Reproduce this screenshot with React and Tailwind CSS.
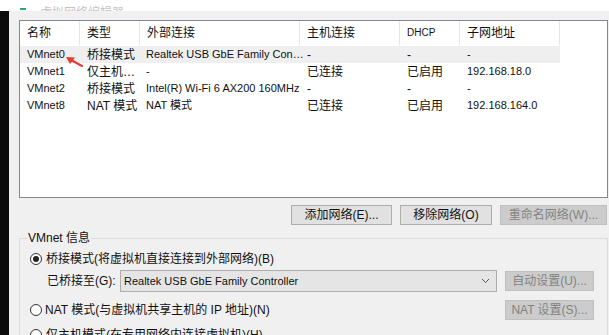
import React from 'react';

const font = { fontFamily: '"Liberation Sans", "Noto Sans CJK SC", sans-serif' };

const rows = [
  { name: 'VMnet0', type: '桥接模式', ext: 'Realtek USB GbE Family Con…', host: '-', dhcp: '-', subnet: '-', selected: true },
  { name: 'VMnet1', type: '仅主机…', ext: '-', host: '已连接', dhcp: '已启用', subnet: '192.168.18.0' },
  { name: 'VMnet2', type: '桥接模式', ext: 'Intel(R) Wi-Fi 6 AX200 160MHz', host: '-', dhcp: '-', subnet: '-' },
  { name: 'VMnet8', type: 'NAT 模式', ext: 'NAT 模式', host: '已连接', dhcp: '已启用', subnet: '192.168.164.0' },
];

function Radio({ checked }) {
  return (
    <span className="w-[12px] h-[12px] rounded-full border border-[#333333] bg-white flex items-center justify-center shrink-0">
      {checked && <span className="w-[6px] h-[6px] rounded-full bg-[#222222]" />}
    </span>
  );
}

function Button({ children, disabled, className }) {
  return (
    <div
      className={
        'h-[20px] flex items-center justify-center border text-[12px] whitespace-nowrap ' +
        (disabled
          ? 'bg-[#cccccc] border-[#bfbfbf] text-[#838383] '
          : 'bg-[#e1e1e1] border-[#adadad] text-[#111111] ') +
        className
      }
    >
      {children}
    </div>
  );
}

export default function App() {
  return (
    <div className="w-[609px] h-[335px] overflow-hidden bg-[#f0f0f0] text-[#111111] text-[12px] leading-none" style={font}>
      {/* title bar remainder */}
      <div className="h-[11px] bg-white overflow-hidden flex items-end pl-[20px]">
        <div className="w-[6px] h-[2px] bg-[#2fa37a] mb-[1px]" />
        <div className="text-[12px] text-[#c4c4c4] -mb-[8px] ml-[14px] whitespace-nowrap">虚拟网络编辑器</div>
      </div>

      <div className="flex h-[324px]">
        <div className="w-[9px] bg-[#0c0c0c] shrink-0" />
        <div className="flex-1 pl-[10px] pt-[9px]">
          {/* network list */}
          <div className="relative w-[589px] h-[178px] bg-white border border-[#828790]">
            <div className="flex h-[24px] items-center">
              {[
                ['名称', 'w-[60px]'],
                ['类型', 'w-[60px]'],
                ['外部连接', 'w-[160px]'],
                ['主机连接', 'w-[100px]'],
                ['DHCP', 'w-[60px] text-[10px]'],
                ['子网地址', 'w-[100px]'],
              ].map(([t, c]) => (
                <div key={t} className={'h-full flex items-center pl-[7px] border-r border-[#e5e5e5] ' + c}>
                  {t}
                </div>
              ))}
            </div>
            <div className="mt-[1px]">
              {rows.map((r) => (
                <div key={r.name} className={'flex h-[17px] items-center w-[540px] whitespace-nowrap ' + (r.selected ? 'bg-[#efefef]' : '')}>
                  <div className="w-[60px] pl-[7px] text-[11px]">{r.name}</div>
                  <div className="w-[60px] pl-[7px]">{r.type}</div>
                  <div className="w-[160px] pl-[6px] text-[11px]">{r.ext}</div>
                  <div className="w-[100px] pl-[7px]">{r.host}</div>
                  <div className="w-[60px] pl-[7px]">{r.dhcp}</div>
                  <div className="w-[100px] pl-[7px] text-[11px]">{r.subnet}</div>
                </div>
              ))}
            </div>
            <svg className="absolute left-[45px] top-[35px]" width="20" height="12" viewBox="0 0 20 12">
              <line x1="17" y1="10" x2="6" y2="4" stroke="#e63b2e" strokeWidth="2" strokeLinecap="round" />
              <polygon points="1,1 10,1.5 5,8" fill="#e63b2e" />
            </svg>
          </div>

          {/* buttons */}
          <div className="flex justify-end gap-[8px] mt-[7px] w-[588px]">
            <Button className="w-[101px]">添加网络(E)...</Button>
            <Button className="w-[92px]">移除网络(O)</Button>
            <Button disabled className="w-[107px]">重命名网络(W)...</Button>
          </div>

          {/* group box */}
          <div className="relative mt-[13px] w-[589px] h-[120px] border border-[#dcdcdc] pl-[10px]">
            <div className="absolute left-[7px] -top-[7px] bg-[#f0f0f0] px-[1px] text-[12px]">VMnet 信息</div>
            <div className="flex items-center gap-[4px] mt-[13px] h-[14px]">
              <Radio checked />
              <span>桥接模式(将虚拟机直接连接到外部网络)(B)</span>
            </div>
            <div className="flex items-center mt-[4px] pl-[17px]">
              <span className="w-[73px]">已桥接至(G):</span>
              <div className="w-[377px] h-[22px] bg-[#e5e5e5] border border-[#adadad] flex items-center justify-between pl-[3px] pr-[6px]">
                <span className="text-[11px]">Realtek USB GbE Family Controller</span>
                <svg width="9" height="6" viewBox="0 0 9 6">
                  <polyline points="1,1 4.5,4.5 8,1" fill="none" stroke="#555555" strokeWidth="1" />
                </svg>
              </div>
              <Button disabled className="w-[89px] ml-[8px]">自动设置(U)...</Button>
            </div>
            <div className="flex items-center mt-[8px] h-[20px]">
              <div className="flex items-center gap-[3px] w-[475px]">
                <Radio />
                <span>NAT 模式(与虚拟机共享主机的 IP 地址)(N)</span>
              </div>
              <Button disabled className="w-[89px]">NAT 设置(S)...</Button>
            </div>
            <div className="flex items-center gap-[4px] mt-[9px]">
              <Radio />
              <span>仅主机模式(在专用网络内连接虚拟机)(H)</span>
            </div>
          </div>
        </div>
      </div>
    </div>
  );
}
